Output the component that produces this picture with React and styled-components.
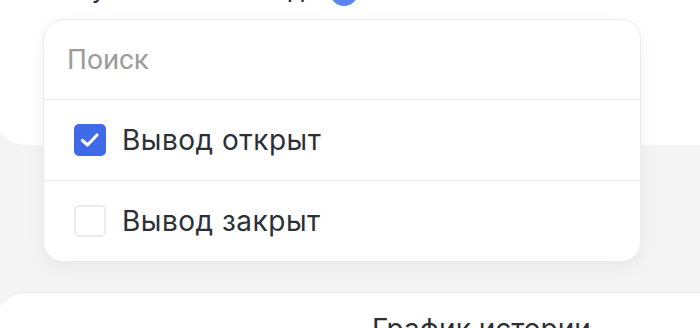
import React, { useState } from 'react';
import styled, { createGlobalStyle } from 'styled-components';

const GlobalStyle = createGlobalStyle`
  html, body {
    margin: 0;
    padding: 0;
    background: #f4f4f4;
    overflow: hidden;
  }
  #root {
    width: 700px;
    height: 328px;
    position: relative;
    overflow: hidden;
  }
`;

const Page = styled.div`
  display: flex;
  flex-direction: column;
  gap: 148px;
  width: 700px;
  height: 328px;
`;

const TopCard = styled.div`
  height: 175px;
  flex: none;
  margin-top: -30px;
  margin-left: -6px;
  margin-right: -40px;
  background: #ffffff;
  border-radius: 0 0 0 32px;
  padding: 0 0 0 78px;
  box-sizing: border-box;
`;

const TopTitle = styled.div`
  display: flex;
  align-items: center;
  gap: 26px;
  font-family: Inter, "Noto Sans", sans-serif;
  font-size: 26px;
  color: #2b2f36;
  height: 28px;
  margin-top: 4px;
`;

const Dot = styled.span`
  width: 28px;
  height: 28px;
  margin-top: 8px;
  border-radius: 50%;
  background: #5b86f0;
  flex: none;
`;

const BottomCard = styled.div`
  flex: 1;
  margin-left: -6px;
  margin-right: -40px;
  background: #ffffff;
  border-radius: 32px 0 0 0;
  box-shadow: 0 -1px 0 #ececec;
  padding: 19px 0 0 378px;
`;

const ChartTitle = styled.div`
  font-family: Inter, "Noto Sans", sans-serif;
  font-size: 28px;
  font-weight: 400;
  color: #2b2f36;
`;

const Dropdown = styled.div`
  position: absolute;
  top: 19px;
  left: 43px;
  width: 598px;
  box-sizing: border-box;
  background: #ffffff;
  border: 1.5px solid #ececec;
  border-radius: 20px;
  box-shadow: 0 6px 18px rgba(0, 0, 0, 0.05);
  overflow: hidden;
`;

const SearchInput = styled.input`
  display: block;
  width: 100%;
  height: 80px;
  box-sizing: border-box;
  border: none;
  border-bottom: 1.5px solid #ececec;
  outline: none;
  padding: 0 0 0 23px;
  font-family: Roboto, "Noto Sans", sans-serif;
  font-size: 28px;
  color: #2b2f36;
  background: transparent;
  &::placeholder {
    color: #9c9c9c;
  }
`;

const Option = styled.label`
  display: flex;
  align-items: center;
  gap: 16px;
  height: 80px;
  padding: 0 0 0 30px;
  border-bottom: ${p => (p.$last ? 'none' : '1.5px solid #ececec')};
  font-family: Inter, "Noto Sans", sans-serif;
  font-size: 28px;
  color: #2b2f36;
  cursor: pointer;
  letter-spacing: 0.5px;
`;

const Box = styled.span`
  width: 32px;
  height: 32px;
  box-sizing: border-box;
  border-radius: 5px;
  flex: none;
  display: flex;
  align-items: center;
  justify-content: center;
  background: ${p => (p.$checked ? '#3e6ae8' : '#ffffff')};
  border: ${p => (p.$checked ? 'none' : '2px solid #ebebeb')};
`;

function Check() {
  return (
    <svg width="32" height="32" viewBox="0 0 32 32" fill="none">
      <path d="M8.5 16.5 L13.5 21 L23 11" stroke="#fff" strokeWidth="3.2" strokeLinecap="round" strokeLinejoin="round" />
    </svg>
  );
}

const options = ['Вывод открыт', 'Вывод закрыт'];

export default function App() {
  const [selected, setSelected] = useState(['Вывод открыт']);
  const toggle = o =>
    setSelected(s => (s.includes(o) ? s.filter(x => x !== o) : [...s, o]));

  return (
    <>
      <GlobalStyle />
      <Page>
        <TopCard>
          <TopTitle>
            Публичный вывод
            <Dot />
          </TopTitle>
        </TopCard>
        <BottomCard>
          <ChartTitle>График истории</ChartTitle>
        </BottomCard>
      </Page>
      <Dropdown>
        <SearchInput placeholder="Поиск" />
        {options.map((o, i) => (
          <Option key={o} $last={i === options.length - 1} onClick={() => toggle(o)}>
            <Box $checked={selected.includes(o)}>{selected.includes(o) && <Check />}</Box>
            {o}
          </Option>
        ))}
      </Dropdown>
    </>
  );
}
